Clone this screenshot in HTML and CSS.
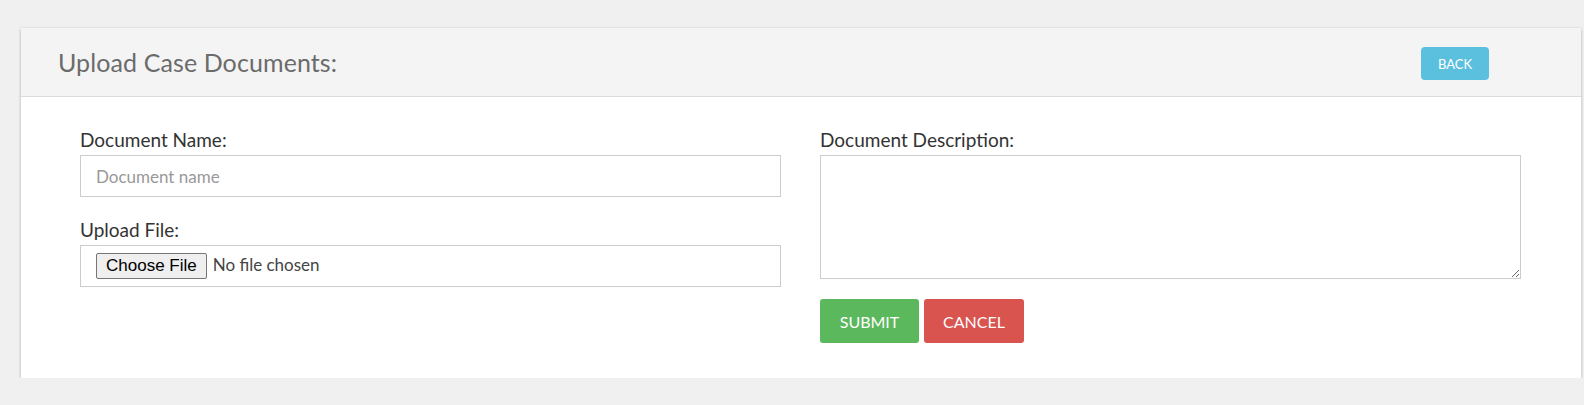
FILE: index.html
```html
<!DOCTYPE html>
<html lang="en">
<head>
<meta charset="utf-8">
<title>Upload Case Documents</title>
<link rel="stylesheet" href="styles.css">
</head>
<body>
<div class="card">
  <div class="card-header">
    <h2 class="card-title">Upload Case Documents:</h2>
    <button class="btn btn-back" type="button">BACK</button>
  </div>
  <div class="card-body">
    <div class="col">
      <label class="field-label" for="docname">Document Name:</label>
      <input class="text-input" id="docname" type="text" placeholder="Document name">
      <label class="field-label spaced" for="docfile">Upload File:</label>
      <div class="file-box"><input class="file-input" id="docfile" type="file"></div>
    </div>
    <div class="col">
      <label class="field-label" for="docdesc">Document Description:</label>
      <textarea class="text-area" id="docdesc"></textarea>
      <div class="actions">
        <button class="btn btn-submit" type="button">SUBMIT</button>
        <button class="btn btn-cancel" type="button">CANCEL</button>
      </div>
    </div>
  </div>
</div>
</body>
</html>
```
FILE: styles.css
```css
* { box-sizing: border-box; }
html, body { margin: 0; padding: 0; }
body {
  background: #f0f0f0;
  font-family: "Lato", "Open Sans", sans-serif;
  color: #333;
}
.card {
  margin: 28px 3px 0 21px;
  background: #fff;
  box-shadow: 0 1px 3px rgba(0,0,0,0.28);
}
.card-header {
  height: 69px;
  background: #f4f4f4;
  border-bottom: 1px solid #dcdcdc;
  display: flex;
  align-items: center;
  justify-content: space-between;
  padding: 0 92px 0 37px;
}
.card-title {
  margin: 0;
  font-weight: 400;
  font-size: 25px;
  color: #6b6b6b;
  letter-spacing: 0.1px;
}
.btn {
  border: none;
  border-radius: 4px;
  color: #fff;
  font-family: inherit;
  cursor: pointer;
}
.btn-back {
  width: 68px;
  height: 33px;
  margin-top: 3px;
  background: #5bc0de;
  font-size: 13px;
}
.card-body {
  display: grid;
  grid-template-columns: 1fr 1fr;
  column-gap: 39px;
  padding: 30px 60px 35px 59px;
  align-items: start;
}
.col { display: flex; flex-direction: column; }
.field-label {
  font-size: 19px;
  line-height: 25px;
  margin-bottom: 3px;
  color: #333;
}
.field-label.spaced { margin-top: 20px; }
.text-input {
  height: 42px;
  border: 1px solid #ccc;
  padding: 0 15px;
  font-family: inherit;
  font-size: 17px;
  color: #555;
  outline: none;
}
.text-input::placeholder { color: #999; }
.file-box {
  height: 42px;
  border: 1px solid #ccc;
  padding: 0 15px;
  display: flex;
  align-items: center;
}
.file-input {
  font-family: inherit;
  font-size: 17px;
  color: #444;
}
.file-input::file-selector-button {
  font-family: "Liberation Sans", Arial, sans-serif;
  font-size: 17px;
  height: 26px;
  padding: 0 9px;
  margin-right: 6px;
  border: 1px solid #767676;
  border-radius: 2px;
  background: #efefef;
  color: #000;
}
.text-area {
  height: 124px;
  border: 1px solid #ccc;
  resize: both;
  font-family: inherit;
  font-size: 17px;
  outline: none;
}
.actions {
  display: flex;
  gap: 5px;
  margin-top: 20px;
}
.btn-submit, .btn-cancel {
  height: 44px;
  font-size: 16px;
  border-radius: 3px;
}
.btn-submit { width: 99px; background: #5cb85c; }
.btn-cancel { width: 100px; background: #d9534f; }
```
